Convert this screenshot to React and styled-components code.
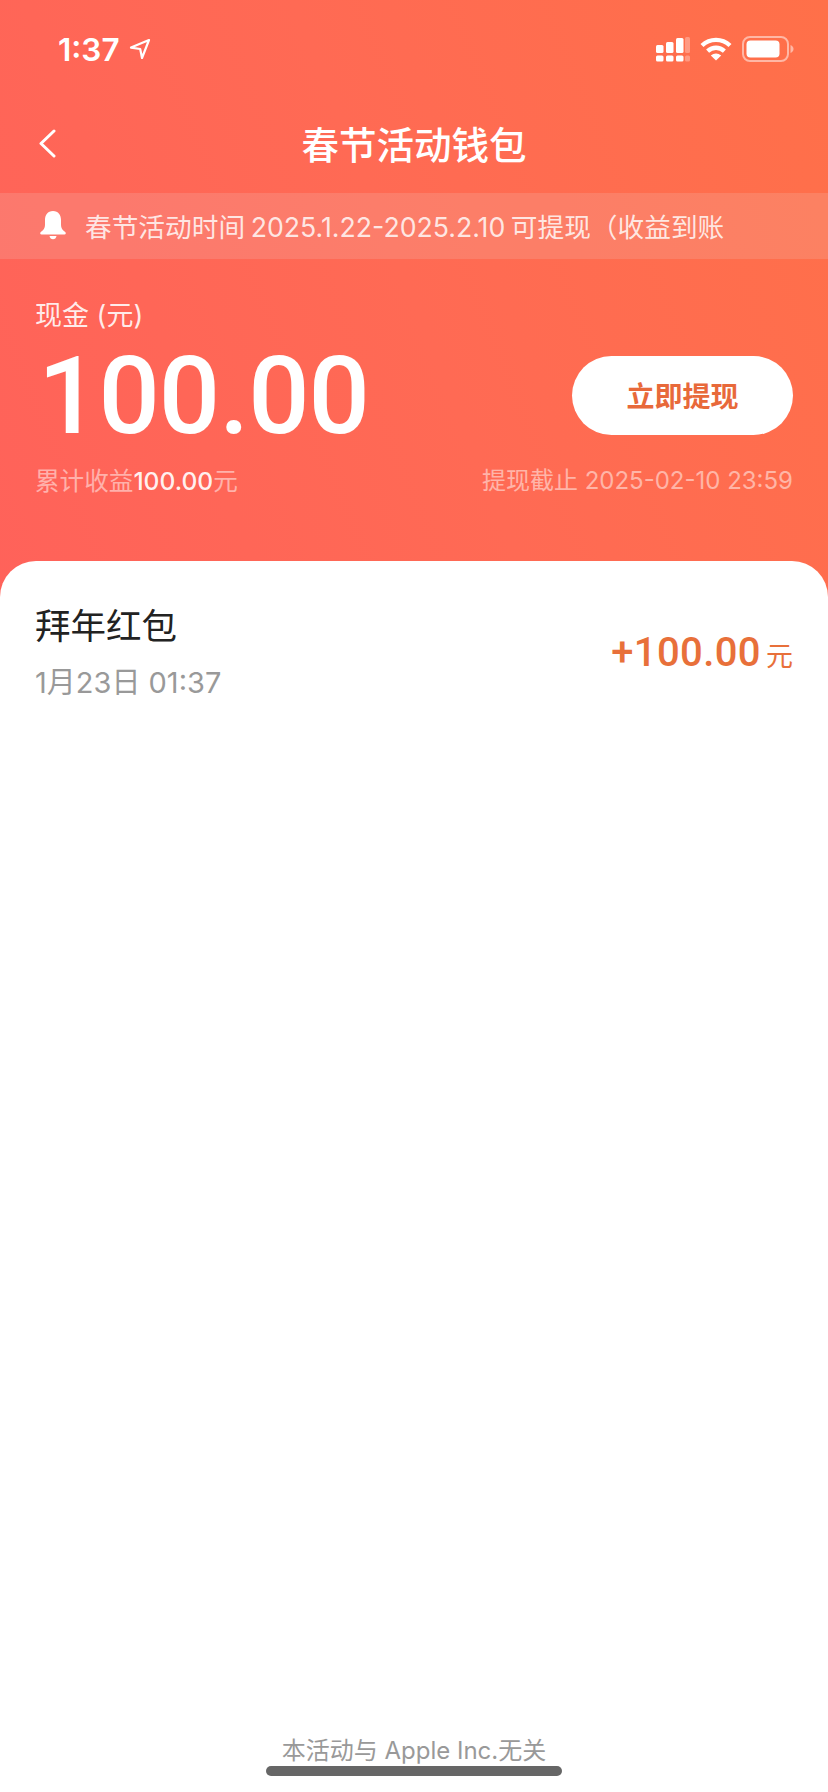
import styled, { createGlobalStyle } from 'styled-components';

const GlobalStyle = createGlobalStyle`
    html, body {
        margin: 0;
        padding: 0;
        background: #fff;
    }
`;

const sans = `Inter, "Noto Sans CJK SC", sans-serif`;

const Page = styled.div`
    width: 828px;
    height: 1792px;
    overflow: hidden;
    display: flex;
    flex-direction: column;
    font-family: ${sans};
    background: linear-gradient(68deg, #ff625a 0%, #ff6a54 50%, #ff7049 100%) top / 100% 600px no-repeat;
`;

// status bar
const StatusBar = styled.div`
    height: 98px;
    flex-shrink: 0;
    box-sizing: border-box;
    padding: 0 34px 0 58px;
    display: flex;
    align-items: center;
    justify-content: space-between;
    color: #fff;
`;
const Time = styled.div`
    display: flex;
    align-items: center;
    gap: 9px;
    font-size: 31.5px;
    font-weight: 600;
`;
const StatusIcons = styled.div`
    display: flex;
    align-items: center;
    gap: 10px;
`;

// nav
const Nav = styled.div`
    height: 95px;
    flex-shrink: 0;
    box-sizing: border-box;
    padding-bottom: 6px;
    display: flex;
    align-items: center;
    justify-content: center;
    position: relative;
    color: #fff;
    font-size: 37.5px;
    font-weight: 500;
`;
const Back = styled.svg`
    position: absolute;
    left: 37px;
    top: 31px;
`;

// notice
const Notice = styled.div`
    height: 66px;
    box-sizing: border-box;
    padding: 0 0 2px 39px;
    display: flex;
    align-items: center;
    gap: 18px;
    background: rgba(232, 232, 232, 0.15);
    color: rgba(255, 255, 255, 0.82);
    font-size: 26.7px;
    word-spacing: -2px;
    white-space: nowrap;
`;

// balance
const Balance = styled.div`
    height: 302px;
    box-sizing: border-box;
    padding: 38px 35px 0 35px;
    display: flex;
    flex-direction: column;
`;
const BalanceLabel = styled.div`
    font-size: 27px;
    line-height: 38px;
    color: rgba(255, 255, 255, 0.88);
`;
const BalanceRow = styled.div`
    display: flex;
    align-items: center;
    justify-content: space-between;
    margin-top: 4px;
    height: 112px;
`;
const Amount = styled.div`
    font-family: Roboto, sans-serif;
    font-size: 108px;
    font-weight: 500;
    letter-spacing: -1px;
    line-height: 112px;
    color: #fff;
    padding: 2px 0 0 3px;
`;
const Withdraw = styled.button`
    width: 221px;
    height: 79px;
    border: 0;
    border-radius: 40px;
    background: #fff;
    color: #e8693a;
    font-family: ${sans};
    font-size: 28px;
    font-weight: 700;
`;
const BalanceFoot = styled.div`
    display: flex;
    justify-content: space-between;
    align-items: center;
    margin-top: 13px;
    font-size: 24.6px;
    line-height: 34px;
    color: rgba(255, 255, 255, 0.5);
`;
const Earned = styled.b`
    font-weight: 500;
    color: rgba(255, 255, 255, 0.92);
`;
const Deadline = styled.div`
    font-size: 24px;
`;

// list
const Sheet = styled.div`
    flex: 1;
    display: flex;
    flex-direction: column;
    background: #fff;
    border-radius: 36px 36px 0 0;
`;
const Record = styled.div`
    display: flex;
    align-items: center;
    justify-content: space-between;
    padding: 41px 35px 0 35px;
`;
const RecordInfo = styled.div`
    display: flex;
    flex-direction: column;
    gap: 11px;
`;
const RecordName = styled.div`
    font-size: 35.5px;
    line-height: 50px;
    color: #222;
`;
const RecordDate = styled.div`
    font-size: 29px;
    line-height: 40px;
    color: #999;
`;
const RecordAmount = styled.div`
    font-family: Roboto, sans-serif;
    font-size: 40px;
    font-weight: 500;
    letter-spacing: 0.4px;
    color: #e8703a;
`;
const Unit = styled.span`
    font-family: ${sans};
    font-size: 27px;
    font-weight: 400;
    letter-spacing: 0;
    margin-left: 5px;
`;

// bottom
const Footer = styled.div`
    margin-top: auto;
    padding-bottom: 16px;
    display: flex;
    flex-direction: column;
    align-items: center;
`;
const FooterText = styled.div`
    font-size: 24px;
    line-height: 30px;
    color: #999;
`;
const HomeBar = styled.div`
    width: 296px;
    height: 10px;
    border-radius: 5px;
    background: #666;
`;

function Cellular() {
    const bars = [
        { x: 0, top: 8 },
        { x: 10, top: 5 },
        { x: 20, top: 1 },
    ];
    return <svg width="34" height="25" viewBox="0 0 34 25">
        {bars.map(b => <g key={b.x} fill="#fff">
            <rect x={b.x} y={b.top} width="7.5" height={16 - b.top} rx="1.5" />
            <rect x={b.x} y="18.5" width="7.5" height="6" rx="1.5" />
        </g>)}
        <rect x="29" y="0" width="5" height="16" rx="1.5" fill="#fff" opacity="0.3" />
        <rect x="29" y="18.5" width="5" height="6" rx="1.5" fill="#fff" opacity="0.3" />
    </svg>
}

function Wifi() {
    return <svg width="32" height="24" viewBox="0 0 32 24" fill="none" stroke="#fff" strokeWidth="4.4">
        <path d="M2 8.5C10 1 22 1 30 8.5" />
        <path d="M7.6 14.2C12.6 9.6 19.4 9.6 24.4 14.2" />
        <path d="M16 23.5L10.8 18.6C14 15.8 18 15.8 21.2 18.6Z" fill="#fff" stroke="none" />
    </svg>
}

function Battery() {
    return <svg width="52" height="26" viewBox="0 0 52 26" fill="none">
        <rect x="1" y="1" width="45" height="24" rx="7" stroke="#fff" strokeOpacity="0.5" strokeWidth="2" />
        <rect x="4.5" y="4.5" width="33" height="17" rx="4" fill="#fff" />
        <path d="M48.5 9C50.5 10 51.5 11.4 51.5 13C51.5 14.6 50.5 16 48.5 17Z" fill="#fff" fillOpacity="0.5" />
    </svg>
}

export default function App() {
    return <Page>
        <GlobalStyle />
        <StatusBar>
            <Time>
                1:37
                <svg width="22" height="22" viewBox="0 0 22 22" fill="none" stroke="#fff" strokeWidth="2.2" strokeLinejoin="round">
                    <path d="M20 2L2 9.6L11.2 11L13 20Z" />
                </svg>
            </Time>
            <StatusIcons>
                <Cellular />
                <Wifi />
                <Battery />
            </StatusIcons>
        </StatusBar>

        <Nav>
            <Back width="20" height="30" viewBox="0 0 20 30" fill="none" stroke="#fff" strokeWidth="3" strokeLinecap="round" strokeLinejoin="round">
                <path d="M17 2L4 14.5L17 27" />
            </Back>
            春节活动钱包
        </Nav>

        <Notice>
            <svg width="28" height="30" viewBox="0 0 28 30" fill="#fff">
                <path d="M14 1C8.6 1 6 5.2 6 10V15C6 18 4.6 20 1.8 22C0.8 22.8 1 24.5 2.6 24.5H25.4C27 24.5 27.2 22.8 26.2 22C23.4 20 22 18 22 15V10C22 5.2 19.4 1 14 1Z" />
                <path d="M10.5 26H17.5C17.2 28 15.8 29.3 14 29.3C12.2 29.3 10.8 28 10.5 26Z" />
            </svg>
            春节活动时间 2025.1.22-2025.2.10 可提现（收益到账
        </Notice>

        <Balance>
            <BalanceLabel>现金 (元)</BalanceLabel>
            <BalanceRow>
                <Amount>100.00</Amount>
                <Withdraw>立即提现</Withdraw>
            </BalanceRow>
            <BalanceFoot>
                <div>累计收益<Earned>100.00</Earned>元</div>
                <Deadline>提现截止 2025-02-10 23:59</Deadline>
            </BalanceFoot>
        </Balance>

        <Sheet>
            <Record>
                <RecordInfo>
                    <RecordName>拜年红包</RecordName>
                    <RecordDate>1月23日 01:37</RecordDate>
                </RecordInfo>
                <RecordAmount>+100.00<Unit>元</Unit></RecordAmount>
            </Record>
            <Footer>
                <FooterText>本活动与 Apple Inc.无关</FooterText>
                <HomeBar />
            </Footer>
        </Sheet>
    </Page>
}
